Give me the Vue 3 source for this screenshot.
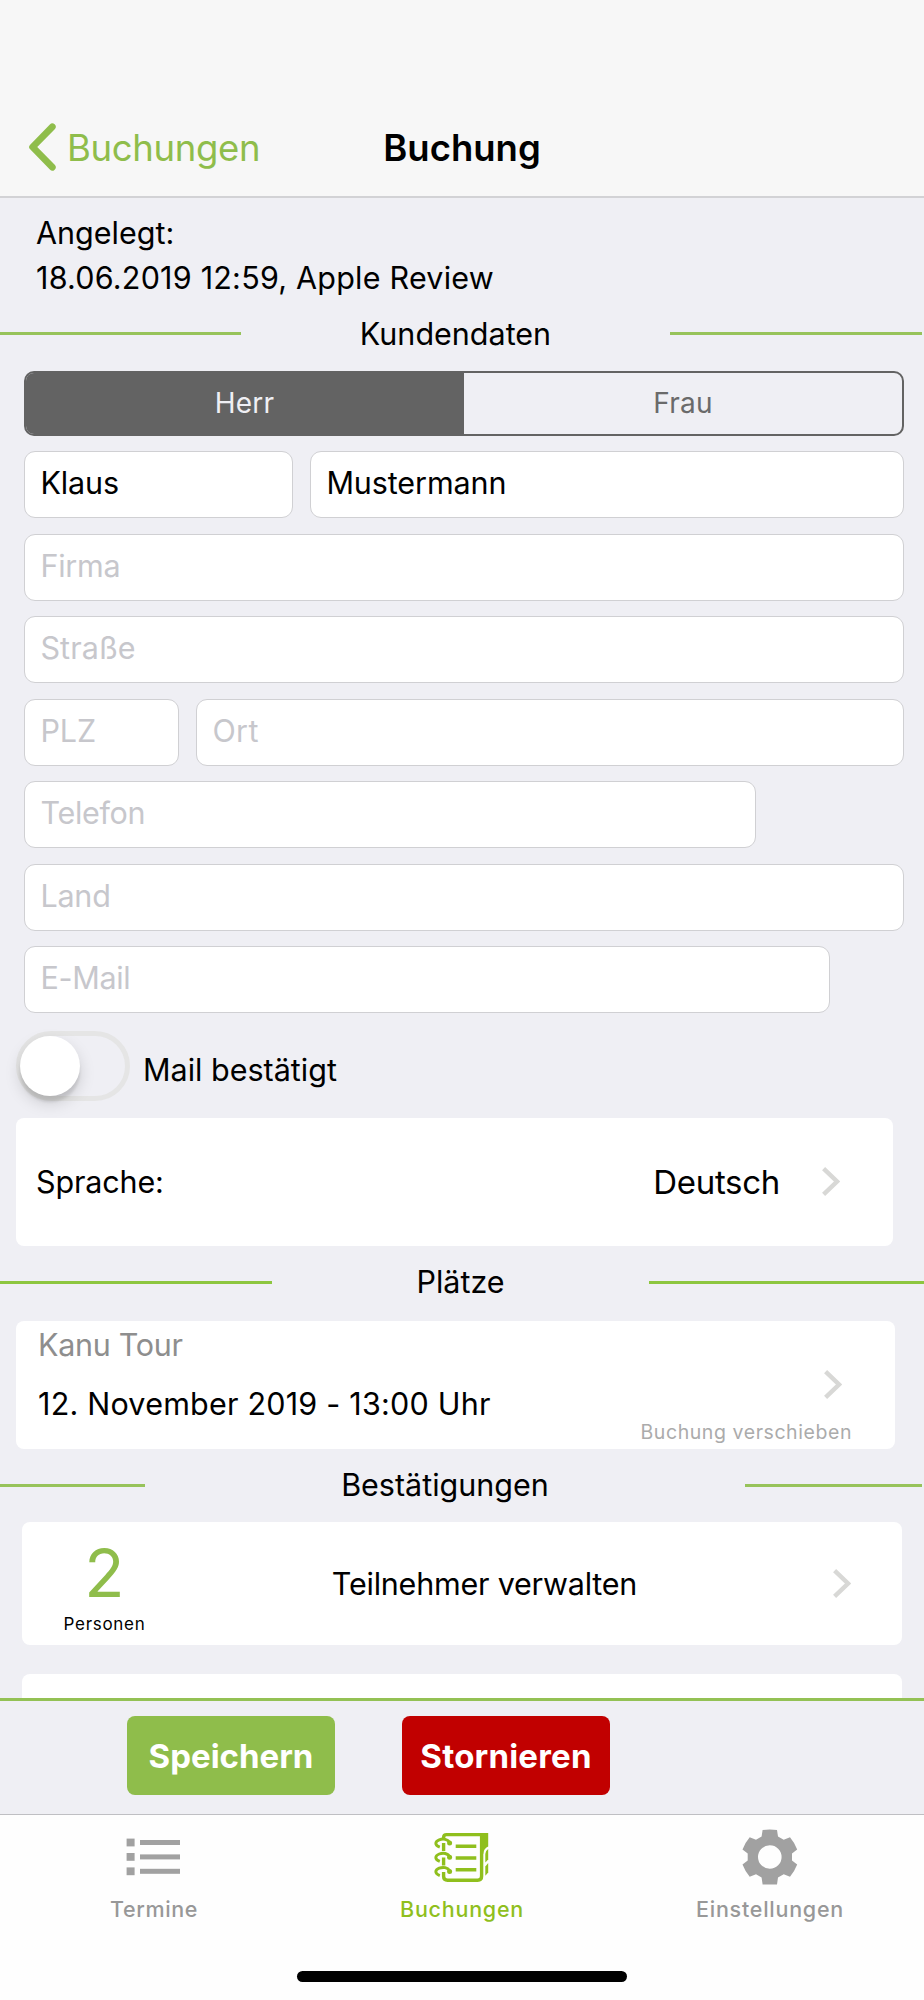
<template>
    <div class="screen">
        <header class="navbar">
            <div class="back">
                <svg class="back-icon" viewBox="0 0 28 48">
                    <path d="M24.3 3.8 L4.6 24 L24.3 44.2" />
                </svg>
                <span class="back-label">Buchungen</span>
            </div>
            <h1 class="title">Buchung</h1>
        </header>

        <main class="content">
            <div class="created">
                <div class="created-label">Angelegt:</div>
                <div class="created-value">18.06.2019 12:59, Apple Review</div>
            </div>

            <div class="divider customer">
                <span class="rule"></span>
                <h2>Kundendaten</h2>
                <span class="rule"></span>
            </div>

            <div class="segmented">
                <div v-for="option in salutations" :key="option" :class="['segment', { active: option === salutation }]"
                    @click="salutation = option">{{ option }}</div>
            </div>

            <div class="form">
                <div v-for="(row, rowIndex) in rows" :key="rowIndex" class="form-row">
                    <div v-for="field in row" :key="field.label" :class="['field', { empty: !field.value }]"
                        :style="{ width: field.width + 'px' }">
                        <span :style="{ letterSpacing: field.spacing + 'px' }">{{ field.value || field.label }}</span>
                    </div>
                </div>
            </div>

            <div class="confirm">
                <div :class="['switch', { on: confirmed }]" @click="confirmed = !confirmed">
                    <span class="knob"></span>
                </div>
                <span class="confirm-label">Mail bestätigt</span>
            </div>

            <div class="card language">
                <span class="language-label">Sprache:</span>
                <span class="language-value">Deutsch</span>
                <svg class="chevron" viewBox="0 0 18 29">
                    <path d="M1.6 1.6 L15 14.5 L1.6 27.4" />
                </svg>
            </div>

            <div class="divider places">
                <span class="rule"></span>
                <h2>Plätze</h2>
                <span class="rule"></span>
            </div>

            <div class="card tour">
                <div class="tour-info">
                    <div class="tour-name">Kanu Tour</div>
                    <div class="tour-date">12. November 2019 - 13:00 Uhr</div>
                </div>
                <div class="tour-action">
                    <svg class="chevron" viewBox="0 0 18 29">
                        <path d="M1.6 1.6 L15 14.5 L1.6 27.4" />
                    </svg>
                    <span class="tour-move">Buchung verschieben</span>
                </div>
            </div>

            <div class="divider confirmations">
                <span class="rule"></span>
                <h2>Bestätigungen</h2>
                <span class="rule"></span>
            </div>

            <div class="card people">
                <div class="count">
                    <span class="count-number">2</span>
                    <span class="count-label">Personen</span>
                </div>
                <span class="people-label">Teilnehmer verwalten</span>
                <svg class="chevron" viewBox="0 0 18 29">
                    <path d="M1.6 1.6 L15 14.5 L1.6 27.4" />
                </svg>
            </div>

            <div class="card next"></div>
        </main>

        <div class="actions">
            <button class="btn save">Speichern</button>
            <button class="btn cancel">Stornieren</button>
        </div>

        <nav class="tabbar">
            <div class="tab">
                <svg class="tab-icon" viewBox="0 0 56 56">
                    <g fill="#a1a1a1">
                        <rect x="0.6" y="9.6" width="8" height="7.8" />
                        <rect x="0.6" y="24" width="8" height="7.8" />
                        <rect x="0.6" y="38.4" width="8" height="7.8" />
                        <rect x="14" y="11" width="40" height="5" />
                        <rect x="14" y="25.4" width="40" height="5" />
                        <rect x="14" y="39.8" width="40" height="5" />
                    </g>
                </svg>
                <span class="tab-label termine">Termine</span>
            </div>
            <div class="tab active">
                <svg class="tab-icon" viewBox="0 0 56 56">
                    <g transform="translate(0 3)" fill="none" stroke="#8fbf1d" stroke-width="3.4">
                        <path d="M9.6 6 V5.5 Q9.6 2.6 12.5 2.6 H47.6 V44.2 Q47.6 48.2 43.6 48.2 H13.6 Q9.6 48.2 9.6 44.2 V40" />
                        <path d="M9.6 11 V19 M9.6 25.5 V33.5" />
                        <path d="M21.7 14.3 H42.3 M21.7 26 H42.3 M21.7 37.7 H42.3" />
                        <path d="M47 1 H54.2 V14.5 Q49.5 16.5 49.2 22 H47 Z" fill="#8fbf1d" stroke="none" />
                        <path d="M54.2 17 Q51.6 18.4 51.3 22 V30.4 L54.2 27.5 Z" fill="#8fbf1d" stroke="none" />
                        <path d="M54.2 31 L51.3 34.6 V43.8 L54.2 40.5 Z" fill="#8fbf1d" stroke="none" />
                        <g v-for="y in [0, 14.2, 28.4]" :key="y" :transform="`translate(0 ${y})`" stroke-width="2.9">
                            <path d="M15.8 11 C14 6.8 9 6.4 5.2 7.8 C1.2 9.4 0 13 5.8 15.2" />
                            <circle cx="15.6" cy="11" r="2.5" fill="#8fbf1d" stroke="none" />
                        </g>
                    </g>
                </svg>
                <span class="tab-label buchungen">Buchungen</span>
            </div>
            <div class="tab">
                <svg class="tab-icon" viewBox="0 0 56 56">
                    <path fill="#a1a1a1" fill-rule="evenodd"
                        d="M20.6 1 Q27.8 -0.2 35 1 L36 7.5 L41.7 10.7 L48 8.3 Q52.6 13.8 55.2 20.5 L50 24.6 V31.4 L55.2 35.5 Q52.6 42.2 48 47.7 L41.7 45.3 L36 48.5 L35 55.4 H20.6 L19.6 48.5 L14 45.3 L7.7 47.7 Q3 42.2 0.5 35.5 L5.7 31.4 V24.6 L0.5 20.5 Q3 13.8 7.7 8.3 L14 10.7 L19.6 7.5 Z M39.6 28 A11.8 11.8 0 1 0 16 28 A11.8 11.8 0 1 0 39.6 28 Z" />
                </svg>
                <span class="tab-label einstellungen">Einstellungen</span>
            </div>
        </nav>
        <div class="home-area">
            <span class="home-indicator"></span>
        </div>
    </div>
</template>

<script setup>
import { ref } from 'vue'

const salutations = ['Herr', 'Frau']
const salutation = ref('Herr')
const confirmed = ref(false)

const rows = [
    [
        { label: 'Vorname', value: 'Klaus', width: 268.5, spacing: -0.1 },
        { label: 'Nachname', value: 'Mustermann', width: 594, spacing: -0.1 }
    ],
    [{ label: 'Firma', width: 879.5, spacing: -0.25 }],
    [{ label: 'Straße', width: 879.5, spacing: 0.1 }],
    [
        { label: 'PLZ', width: 154.5, spacing: 0 },
        { label: 'Ort', width: 708, spacing: 0.4 }
    ],
    [{ label: 'Telefon', width: 732, spacing: -0.3 }],
    [{ label: 'Land', width: 879.5, spacing: -0.2 }],
    [{ label: 'E-Mail', width: 805.5, spacing: -0.3 }]
]
</script>

<style>
body {
    margin: 0;
    background: #efeff4;
}
</style>

<style scoped>
.screen {
    display: flex;
    flex-direction: column;
    width: 924px;
    height: 2000px;
    overflow: hidden;
    background: #efeff4;
    color: #000;
    font-family: Inter, "Liberation Sans", sans-serif;
    font-size: 30.5px;
    line-height: 40px;
    white-space: nowrap;
}

.screen * {
    box-sizing: border-box;
}

h1,
h2 {
    margin: 0;
    font-size: inherit;
    font-weight: 400;
}

/* navigation bar */
.navbar {
    flex: none;
    display: grid;
    grid-template-columns: 1fr auto 1fr;
    align-items: center;
    height: 198px;
    padding-top: 98px;
    background: #f7f7f7;
    border-bottom: 2px solid #d2d2d5;
}

.back {
    display: flex;
    align-items: center;
    gap: 11px;
    padding-left: 28px;
    color: #8fbd4b;
}

.back-icon {
    width: 28px;
    height: 48px;
    fill: none;
    stroke: #8fbd4b;
    stroke-width: 6.8;
    stroke-linecap: round;
    stroke-linejoin: round;
}

.back-label {
    padding-top: 1px;
    font-size: 36.5px;
    letter-spacing: -0.35px;
}

.title {
    padding-top: 1px;
    font-size: 36.5px;
    font-weight: 600;
}

/* scroll area */
.content {
    flex: none;
    display: flex;
    flex-direction: column;
    height: 1500px;
    overflow: hidden;
}

.content > * {
    flex: none;
}

.created {
    padding: 12px 0 0 36px;
    line-height: 45px;
}

.created-value {
    letter-spacing: 0.22px;
}

.divider {
    display: flex;
    align-items: center;
    height: 40px;
}

.divider h2 {
    flex: 1;
    text-align: center;
}

.rule {
    height: 3px;
    background: #97c35a;
}

.customer {
    margin-top: 13.5px;
    padding-right: 2px;
}

.customer .rule:first-child {
    width: 241px;
}

.customer .rule:last-child {
    width: 252px;
}

.segmented {
    display: flex;
    width: 880px;
    height: 65px;
    margin: 17px 0 0 24px;
    border: 2px solid #636363;
    border-radius: 10px;
    overflow: hidden;
    font-size: 28px;
    line-height: 61px;
    letter-spacing: 0.25px;
    text-align: center;
    color: #6a6a6a;
}

.segment {
    width: 50%;
}

.segment.active {
    padding-right: 1px;
    background: #636363;
    color: #efeff4;
}

.form {
    display: flex;
    flex-direction: column;
    gap: 15.5px;
    margin: 15.5px 0 0 24.4px;
}

.form-row {
    display: flex;
    gap: 17.5px;
}

.field {
    height: 67px;
    padding-left: 15px;
    background: #fff;
    border: 1px solid #d0d0d3;
    border-radius: 11px;
    line-height: 62px;
}

.field.empty {
    color: #c7c7cc;
}

.confirm {
    display: flex;
    align-items: center;
    gap: 13px;
    height: 70px;
    margin: 18px 0 0 16px;
}

.switch {
    display: flex;
    align-items: center;
    width: 114px;
    height: 70px;
    border: 5px solid #e5e5e5;
    border-radius: 35px;
}

.switch.on {
    justify-content: flex-end;
    background: #8fbd4b;
}

.knob {
    width: 60px;
    height: 60px;
    margin: 0 -1px;
    border-radius: 50%;
    background: #fff;
    box-shadow: 0 7px 16px rgba(0, 0, 0, 0.15), 0 6px 3px rgba(0, 0, 0, 0.1);
}

.confirm-label {
    padding-top: 8px;
}

.card {
    display: flex;
    background: #fff;
    border-radius: 8px;
}

.chevron {
    width: 18px;
    height: 29px;
    fill: none;
    stroke: #d8d8d6;
    stroke-width: 4.4;
}

.language {
    align-items: center;
    width: 877px;
    height: 127.5px;
    margin: 17px 0 0 16px;
    padding: 0 53px 0 20px;
}

.language-label {
    letter-spacing: -0.15px;
}

.language-value {
    margin-left: auto;
    margin-right: 42px;
    font-size: 33px;
    letter-spacing: -0.3px;
}

.places {
    margin-top: 16.5px;
}

.places .rule {
    background: #8dc63f;
}

.places .rule:first-child {
    width: 272px;
}

.places .rule:last-child {
    width: 275px;
}

.tour {
    justify-content: space-between;
    width: 879px;
    height: 128px;
    margin: 19px 0 0 16px;
    padding: 0 43px 0 22px;
}

.tour-name {
    margin-top: 4px;
    letter-spacing: -0.3px;
    color: #8e8e8e;
}

.tour-date {
    margin-top: 19px;
    letter-spacing: 0.22px;
}

.tour-action {
    display: flex;
    flex-direction: column;
    align-items: flex-end;
    padding-top: 49px;
}

.tour-action .chevron {
    margin-right: 10px;
}

.tour-move {
    margin-top: 21px;
    font-size: 19.5px;
    line-height: 24px;
    letter-spacing: 0.57px;
    color: #ababab;
}

.confirmations {
    margin-top: 16px;
    padding-right: 2px;
}

.confirmations .rule:first-child {
    width: 145px;
}

.confirmations .rule:last-child {
    width: 177px;
}

.people {
    align-items: center;
    width: 880px;
    height: 123px;
    margin: 17px 0 0 22px;
    padding-right: 51px;
}

.count {
    display: flex;
    flex-direction: column;
    align-items: center;
    width: 165px;
    padding-top: 2px;
}

.count-number {
    font-size: 66px;
    line-height: 78px;
    font-weight: 400;
    color: #8fbd4b;
}

.count-label {
    font-size: 17px;
    line-height: 24px;
    letter-spacing: 0.7px;
}

.people-label {
    flex: 1;
    padding-right: 51px;
    letter-spacing: -0.22px;
    text-align: center;
}

.next {
    width: 880px;
    height: 123px;
    margin: 29px 0 0 22px;
}

/* action buttons */
.actions {
    flex: none;
    display: flex;
    gap: 67px;
    height: 116px;
    padding: 15px 0 0 127px;
    border-top: 3px solid #93c154;
}

.btn {
    width: 208px;
    height: 79px;
    padding: 0;
    border: none;
    border-radius: 8px;
    color: #fff;
    font-family: inherit;
    font-size: 33px;
    font-weight: 700;
}

.save {
    background: #8fbd4b;
}

.cancel {
    background: #c10000;
    letter-spacing: 0.2px;
}

/* tab bar */
.tabbar {
    flex: none;
    display: flex;
    height: 120px;
    background: #fefefe;
    border-top: 1px solid #bfbfc3;
}

.tab {
    flex: 1;
    display: flex;
    flex-direction: column;
    align-items: center;
    padding-top: 14px;
    color: #989898;
}

.tab.active {
    color: #8fbf1d;
}

.tab-icon {
    width: 56px;
    height: 56px;
}

.tab-label {
    margin-top: 11px;
    font-size: 21.5px;
    line-height: 26px;
    font-weight: 500;
    letter-spacing: 0.75px;
}

.tab-label.termine {
    letter-spacing: 0.6px;
}

.home-area {
    flex: 1;
    display: flex;
    justify-content: center;
    padding-top: 37px;
    background: #fefefe;
}

.home-indicator {
    width: 330px;
    height: 11px;
    border-radius: 6px;
    background: #000;
}
</style>
